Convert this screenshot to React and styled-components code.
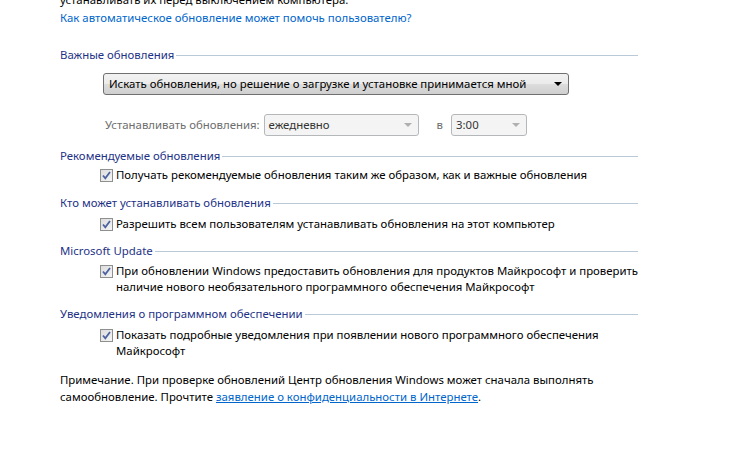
import styled, { createGlobalStyle } from "styled-components";

const GlobalStyle = createGlobalStyle`
  html, body {
    margin: 0;
    padding: 0;
    background: #ffffff;
    overflow: hidden;
  }
  body {
    font-family: "Segoe UI", "Noto Sans", "Open Sans", sans-serif;
    font-size: 11.4px;
    color: #000000;
  }
`;

const Page = styled.div`
  width: 578px;
  padding-left: 60px;
  line-height: 16px;
`;

const ClippedText = styled.div`
  margin-top: -8px;
`;

const HelpLink = styled.a`
  display: block;
  margin-top: 2px;
  color: #0066cc;
  text-decoration: none;
`;

const Section = styled.div`
  margin-top: ${(p) => p.$gap || 12}px;
`;

const Header = styled.div`
  display: flex;
  align-items: center;
  color: #1e3287;
  white-space: nowrap;

  &::after {
    content: "";
    flex: 1;
    margin-left: 2px;
    border-top: 1px solid #b9c9d8;
  }
`;

const ComboRow = styled.div`
  margin-top: ${(p) => p.$gap}px;
  padding-left: ${(p) => p.$indent}px;
  display: flex;
  align-items: center;
  height: 22px;
`;

const Combo = styled.div`
  box-sizing: border-box;
  width: ${(p) => p.$width}px;
  height: 22px;
  display: flex;
  align-items: center;
  justify-content: space-between;
  padding: 0 6px 0 ${(p) => (p.$disabled ? 4 : 5)}px;
  border: 1px solid ${(p) => (p.$disabled ? "#b5b8bb" : "#707070")};
  border-radius: 3px;
  background: ${(p) =>
    p.$disabled
      ? "#f4f4f4"
      : "linear-gradient(to bottom, #f2f2f2 0%, #ebebeb 50%, #dddddd 51%, #cfcfcf 100%)"};
  color: ${(p) => (p.$disabled ? "#333333" : "#000000")};
  white-space: nowrap;
`;

const Arrow = styled.span`
  width: 0;
  height: 0;
  border-left: 4px solid transparent;
  border-right: 4px solid transparent;
  border-top: 4px solid ${(p) => (p.$disabled ? "#b0b0b0" : "#000000")};
`;

const DisabledLabel = styled.span`
  color: #6d6d6d;
  margin-right: 4px;
  white-space: nowrap;
`;

const Separator = styled.span`
  color: #6d6d6d;
  margin: 0 8px 0 18px;
`;

const CheckRow = styled.label`
  display: flex;
  align-items: flex-start;
  margin-top: ${(p) => p.$gap || 4}px;
  padding-left: 40px;
`;

const CheckBoxFrame = styled.span`
  flex: none;
  box-sizing: border-box;
  width: 13px;
  height: 13px;
  margin-top: 2px;
  margin-right: 3px;
  border: 1px solid #8e8f8f;
  background: linear-gradient(135deg, #dcdcdc 0%, #f6f6f6 100%);
  display: flex;
  align-items: center;
  justify-content: center;
`;

const CheckText = styled.span`
  line-height: 16px;
  white-space: nowrap;
`;

const Note = styled.p`
  margin: 12px 0 0 0;
  line-height: 17px;
  white-space: nowrap;
`;

const NoteLink = styled.a`
  color: #0066cc;
  text-decoration: underline;
`;

const CheckMark = () => (
  <svg width="9" height="9" viewBox="0 0 9 9">
    <path
      d="M1 4.5 L3.3 7.3 L8 1"
      fill="none"
      stroke="#4c61a0"
      strokeWidth="1.8"
    />
  </svg>
);

const CheckItem = ({ gap, children }) => (
  <CheckRow $gap={gap}>
    <CheckBoxFrame>
      <CheckMark />
    </CheckBoxFrame>
    <CheckText>{children}</CheckText>
  </CheckRow>
);

const App = () => {
  return (
    <>
      <GlobalStyle />
      <Page>
        <ClippedText>устанавливать их перед выключением компьютера.</ClippedText>
        <HelpLink href="#">Как автоматическое обновление может помочь пользователю?</HelpLink>

        <Section $gap={21}>
          <Header>Важные обновления</Header>
          <ComboRow $gap={10} $indent={43}>
            <Combo $width={466}>
              <span>Искать обновления, но решение о загрузке и установке принимается мной</span>
              <Arrow />
            </Combo>
          </ComboRow>
          <ComboRow $gap={19} $indent={45}>
            <DisabledLabel>Устанавливать обновления:</DisabledLabel>
            <Combo $width={155} $disabled>
              <span>ежедневно</span>
              <Arrow $disabled />
            </Combo>
            <Separator>в</Separator>
            <Combo $width={76} $disabled>
              <span>3:00</span>
              <Arrow $disabled />
            </Combo>
          </ComboRow>
        </Section>

        <Section $gap={12}>
          <Header>Рекомендуемые обновления</Header>
          <CheckItem gap={3}>
            Получать рекомендуемые обновления таким же образом, как и важные обновления
          </CheckItem>
        </Section>

        <Section $gap={12}>
          <Header>Кто может устанавливать обновления</Header>
          <CheckItem gap={5}>
            Разрешить всем пользователям устанавливать обновления на этот компьютер
          </CheckItem>
        </Section>

        <Section $gap={11}>
          <Header>Microsoft Update</Header>
          <CheckItem gap={4}>
            При обновлении Windows предоставить обновления для продуктов Майкрософт и проверить
            <br />
            наличие нового необязательного программного обеспечения Майкрософт
          </CheckItem>
        </Section>

        <Section $gap={11}>
          <Header>Уведомления о программном обеспечении</Header>
          <CheckItem gap={5}>
            Показать подробные уведомления при появлении нового программного обеспечения
            <br />
            Майкрософт
          </CheckItem>
        </Section>

        <Note>
          Примечание. При проверке обновлений Центр обновления Windows может сначала выполнять
          <br />
          самообновление. Прочтите <NoteLink href="#">заявление о конфиденциальности в Интернете</NoteLink>.
        </Note>
      </Page>
    </>
  );
};

export default App;
